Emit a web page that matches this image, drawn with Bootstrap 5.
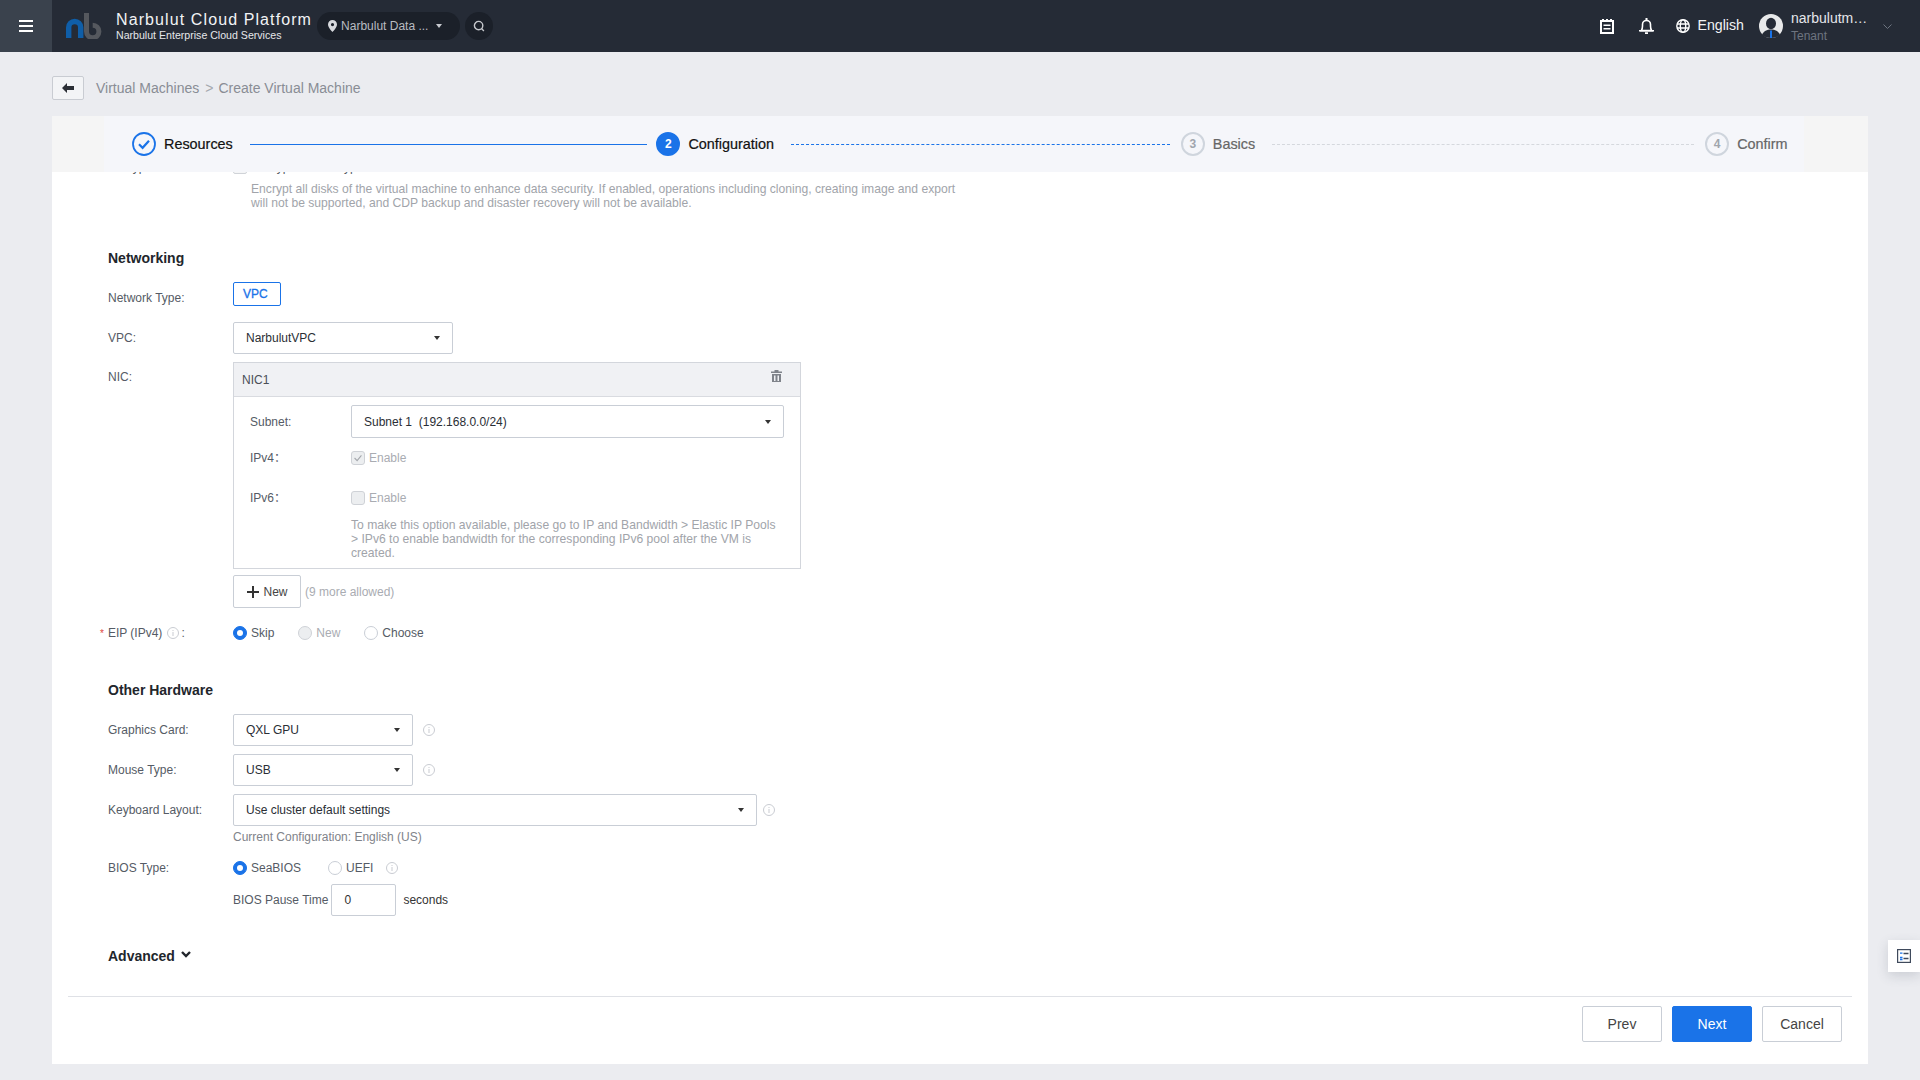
<!DOCTYPE html>
<html lang="en">
<head>
  <meta charset="UTF-8">
  <title>Create Virtual Machine</title>
  <link href="https://cdn.jsdelivr.net/npm/bootstrap@5.3.3/dist/css/bootstrap.min.css" rel="stylesheet">
  <style>
    html, body { height: 100%; }
    body {
      background: #ebecf0;
      font-family: "Liberation Sans", "Noto Sans CJK SC", Arial, sans-serif;
      font-size: 12px;
      color: #555b65;
      overflow: hidden;
      position: relative;
    }
    .topbar { height: 52px; background: #252b36; color: #fff; padding: 0; }
    .menu-toggle { width: 52px; height: 52px; background: #3a424d; }
    .brand-logo { margin-left: 14px; margin-right: 14px; }
    .brand-title { font-size: 16px; letter-spacing: 1.1px; line-height: 18px; color: #f2f3f5; white-space: nowrap; }
    .brand-sub { font-size: 10.6px; line-height: 13px; color: #e6e7ea; white-space: nowrap; }
    .dc-pill { width: 143px; height: 28px; margin-left: 5px; border-radius: 14px; background: #1b2029; color: #b9bcc2; padding-left: 11px; }
    .dc-caret { margin-left: 8px; border-top: 4px solid #c8cad0; border-left: 3.5px solid transparent; border-right: 3.5px solid transparent; }
    .dc-search { width: 28px; height: 28px; margin-left: 5px; border-radius: 50%; background: #1b2029; }
    .top-right { margin-left: auto; }
    .lang-name { font-size: 14.2px; color: #f2f3f5; margin-left: 7px; margin-right: 15px; }
    .user-name { width: 78px; padding-top: 1px; font-size: 14px; line-height: 18px; color: #e4e6ea; overflow: hidden; text-overflow: ellipsis; white-space: nowrap; }
    .user-role { margin-top: 1px; font-size: 12px; line-height: 16px; color: #6d7480; }
    .page-main { padding: 24px 52px 0; }
    .crumbs { height: 24px; margin-bottom: 16px; font-size: 14px; color: #898d95; }
    .back-btn { width: 32px; height: 24px; padding: 0; background: #f3f4f6; border: 1px solid #c9ccd2; border-radius: 2px; margin-right: 12px; }
    .crumb-sep { margin: 0 5px 0 6px; color: #a5a8ae; }
    .wizard { height: 948px; background: #fff; border: 0; border-radius: 0; }
    .steps-outer { height: 56px; background: #f5f5f5; padding: 0 64px 0 52px; flex: none; }
    .steps-inner { height: 56px; background: #f5f6fa; padding: 0 16px 0 28px; }
    .step-seg { width: 524.4px; flex: none; }
    .step-dot { width: 24px; height: 24px; border-radius: 50%; border: 2px solid #cfd5dd; color: #a0a5ad; font-size: 12px; font-weight: 700; flex: none; }
    .step-dot.is-on { background: #1a73e8; border-color: #1a73e8; color: #fff; }
    .step-text { font-size: 14.4px; margin-left: 8px; margin-top: 2px; color: #666; -webkit-text-stroke: .2px currentColor; white-space: nowrap; }
    .step-text.is-on { color: #111; }
    .step-line { flex: 1; margin: 0 11px 0 17px; border-top: 1px dashed #d5d8dd; }
    .step-line.line-done { border-top: 1.5px solid #1a73e8; margin-right: 9px; }
    .step-line.line-now { border-top: 1.5px dashed #1a73e8; }
    .form-scroll { height: 824px; overflow: hidden; padding-left: 56px; flex: none; }
    .clip-row { margin-top: -13px; height: 17px; line-height: 17px; }
    .clip-row .fake-box { width: 14px; height: 14px; border: 1px solid #d0d3d8; border-radius: 2px; background: #f4f5f6; margin-top: 1px; margin-right: 5px; }
    .hint { font-size: 12.14px; line-height: 14px; color: #a1a4aa; }
    .sec-title { font-size: 14px; font-weight: 700; line-height: 20px; color: #22262c; }
    .fld { display: flex; align-items: flex-start; }
    .fld-label { width: 125px; flex: none; line-height: 32px; white-space: nowrap; }
    .vpc-tag { width: 48px; height: 24px; padding: 0 0 0 9px; text-align: left; font-size: 12px; line-height: 22px; -webkit-text-stroke: .3px currentColor; color: #1a73e8; border: 1px solid #1a73e8; border-radius: 2px; background: #fff; }
    .pick-btn { height: 32px; padding: 0 12px; display: flex; align-items: center; justify-content: space-between; font-size: 12px; color: #2a2e35; background: #fff; border: 1px solid #c9ced6; border-radius: 2px; }
    .pick-btn.dropdown-toggle::after { border-top-width: 4px; border-left-width: 3.5px; border-right-width: 3.5px; margin-left: 0; color: #333; }
    .w-180 { width: 180px; }
    .w-220 { width: 220px; }
    .w-433 { width: 433px; height: 33px; }
    .w-524 { width: 524px; }
    .info-ic { margin-left: 10px; margin-top: 10px; flex: none; }
    .nic-box { width: 568px; background: #fff; border: 1px solid #d3d6dc; border-radius: 0; }
    .nic-head { height: 34px; background: #f0f1f4; border-bottom: 1px solid #d9dbe0; padding: 0 18px 0 8px; color: #4a4f57; }
    .nic-body { padding: 8px 13px 8px 16px; }
    .nic-label { width: 101px; flex: none; }
    .nic-line { height: 20px; }
    .form-check-input.mini { width: 14px; height: 14px; margin: 0 4px 0 0; flex: none; float: none; }
    .form-check-input.mini:checked { background-color: #1a73e8; border-color: #1a73e8; }
    .form-check-input.mini:disabled { opacity: 1; background-color: #eceef0; border-color: #cfd2d7; }
    .form-check-input.mini.ticked:disabled { background-image: url("data:image/svg+xml,%3csvg xmlns='http://www.w3.org/2000/svg' viewBox='0 0 14 14'%3e%3cpath fill='none' stroke='%23a5a8ad' stroke-width='1.3' d='M3 7l3 3 5-6'/%3e%3c/svg%3e"); }
    .form-check-input.mini[type=radio]:not(:checked):not(:disabled) { border-color: #c9ced6; }
    .off-text { color: #a9acb2; }
    .add-btn { width: 68px; height: 33px; padding: 0 0 0 1px; font-size: 12px; color: #444; background: #fff; border: 1px solid #c9ced6; border-radius: 2px; }
    .req-star { color: #e0473e; margin-left: -8px; margin-right: 4px; font-size: 10px; }
    .opt-gap { margin-right: 24px; }
    .pause-input { width: 65px; height: 32px; padding: 0 12px; margin: 0 7px 0 3px; font-size: 12px; color: #333; border: 1px solid #c9ced6; border-radius: 2px; }
    .wizard-foot { margin: 0 16px; height: 68px; border-top: 1px solid #dfe1e6; padding: 9px 10px 0 0; column-gap: 10px; flex: none; }
    .foot-btn { width: 80px; height: 36px; padding: 0; font-size: 14px; color: #444; background: #fff; border: 1px solid #c9ced6; border-radius: 2px; }
    .foot-btn.is-next { background: #1a73e8; border-color: #1a73e8; color: #fff; }
    .side-tab { position: absolute; right: 0; top: 940px; width: 32px; height: 32px; background: #fff; box-shadow: 0 4px 12px rgba(60, 70, 90, .18); }
  </style>
</head>
<body>

<!-- Top bar -->
<nav class="navbar topbar flex-nowrap align-items-center">
  <div class="d-flex align-items-center">
    <div class="menu-toggle d-flex align-items-center justify-content-center">
      <svg width="14" height="12" viewBox="0 0 14 12"><path fill="#fff" d="M0 0h14v2H0zM0 5h14v2H0zM0 10h14v2H0z"/></svg>
    </div>
    <svg class="brand-logo" width="36" height="26" viewBox="0 0 36 26">
      <path fill="none" stroke="#0f5ea8" stroke-width="5.4" d="M2.7 25V14.500a6 6 0 0 1 12 0V25"/>
      <path fill="none" stroke="#55585e" stroke-width="5" d="M20.500 0v18.500a6.200 6.200 0 1 0 6.200-6.200"/>
    </svg>
    <div>
      <div class="brand-title">Narbulut Cloud Platform</div>
      <div class="brand-sub">Narbulut Enterprise Cloud Services</div>
    </div>
    <div class="dc-pill d-flex align-items-center">
      <svg class="me-1" width="9" height="12" viewBox="0 0 9 12"><path fill="#d8dade" fill-rule="evenodd" d="M4.500 0A4.500 4.500 0 0 0 0 4.500C0 7.500 4.500 12 4.500 12S9 7.500 9 4.500A4.500 4.500 0 0 0 4.500 0zm0 3a1.600 1.600 0 1 1 0 3.200 1.600 1.600 0 0 1 0-3.200z"/></svg>
      <span>Narbulut Data ...</span>
      <span class="dc-caret"></span>
    </div>
    <div class="dc-search d-flex align-items-center justify-content-center">
      <svg width="12" height="12" viewBox="0 0 12 12"><circle cx="5.600" cy="5.600" r="4.200" fill="none" stroke="#c6c8cd" stroke-width="1.400"/><path stroke="#c6c8cd" stroke-width="1.400" d="M8.500 8.500l2.400 2.400"/></svg>
    </div>
  </div>
  <div class="top-right d-flex align-items-center">
    <svg width="14" height="15" viewBox="0 0 14 15" style="margin-right:25px"><path fill="#fff" fill-rule="evenodd" d="M0 1h2V0h2v1h2V0h2v1h2V0h2v1h2v14H0zM2 3v10h10V3zM3.500 5.500h7V7h-7zM3.500 9h7v1.500h-7z"/></svg>
    <svg width="15" height="16" viewBox="0 0 15 16" style="margin-right:22px"><path fill="none" stroke="#fff" stroke-width="1.600" d="M2.300 12.600c1-1.400 1.200-2.800 1.200-4.600V6.500a4 4 0 0 1 8 0V8c0 1.800.2 3.200 1.200 4.600z"/><path fill="#fff" d="M0 12h15v1.500H0zM6 14.200h3V16H6zM6.500 0h2v2h-2z"/></svg>
    <svg width="14" height="14" viewBox="0 0 14 14"><g fill="none" stroke="#fff" stroke-width="1.400"><circle cx="7" cy="7" r="6.200"/><ellipse cx="7" cy="7" rx="2.700" ry="6.200"/><path d="M1 5h12M1 9h12"/></g></svg>
    <span class="lang-name">English</span>
    <svg class="me-2" width="24" height="24" viewBox="0 0 24 24">
      <circle cx="12" cy="12" r="12" fill="#e8e9ea"/>
      <ellipse cx="12" cy="9.500" rx="5" ry="5.800" fill="#252b36"/>
      <path fill="#252b36" d="M3 21c1.500-4 5-5.500 9-5.500s7.500 1.500 9 5.500c-2.200 2-5.500 3-9 3s-6.800-1-9-3z"/>
      <path fill="#1a73e8" d="M11 16.500h2v7.500h-2z"/>
    </svg>
    <div>
      <div class="user-name">narbulutmanager</div>
      <div class="user-role">Tenant</div>
    </div>
    <svg style="margin-left:14px;margin-right:28px" width="9" height="5" viewBox="0 0 9 5"><path fill="none" stroke="#6d7480" d="M.5.5l4 4 4-4"/></svg>
  </div>
</nav>

<div class="page-main">
  <!-- Breadcrumb -->
  <div class="crumbs d-flex align-items-center">
    <button type="button" class="btn back-btn d-flex align-items-center justify-content-center">
      <svg width="12" height="10" viewBox="0 0 12 10"><path fill="#2b2f36" d="M0 5l5-5v3h7v4H5v3z"/></svg>
    </button>
    <span>Virtual Machines</span><span class="crumb-sep">&gt;</span><span>Create Virtual Machine</span>
  </div>

  <div class="card wizard">
    <!-- Steps -->
    <div class="steps-outer">
      <div class="steps-inner d-flex align-items-center">
        <div class="step-seg d-flex align-items-center">
          <svg width="24" height="24" viewBox="0 0 24 24" class="flex-none"><circle cx="12" cy="12" r="11" fill="none" stroke="#1a73e8" stroke-width="1.800"/><path fill="none" stroke="#1a73e8" stroke-width="2.200" d="M7 12.300l3.600 3.500 6.400-7"/></svg>
          <span class="step-text is-on">Resources</span>
          <span class="step-line line-done"></span>
        </div>
        <div class="step-seg d-flex align-items-center">
          <span class="step-dot is-on d-flex align-items-center justify-content-center">2</span>
          <span class="step-text is-on">Configuration</span>
          <span class="step-line line-now"></span>
        </div>
        <div class="step-seg d-flex align-items-center">
          <span class="step-dot d-flex align-items-center justify-content-center">3</span>
          <span class="step-text">Basics</span>
          <span class="step-line"></span>
        </div>
        <div class="d-flex align-items-center">
          <span class="step-dot d-flex align-items-center justify-content-center">4</span>
          <span class="step-text">Confirm</span>
        </div>
      </div>
    </div>

    <!-- Form, scrolled part way down -->
    <div class="form-scroll">
      <div class="fld clip-row">
        <div class="fld-label" style="line-height:17px">Encryption:</div>
        <span class="fake-box"></span><span>Encrypt the disk type</span>
      </div>
      <div class="hint" style="margin:6px 0 0 143px;width:720px">Encrypt all disks of the virtual machine to enhance data security. If enabled, operations including cloning, creating image and export will not be supported, and CDP backup and disaster recovery will not be available.</div>

      <div class="sec-title" style="margin-top:38px">Networking</div>
      <div class="fld" style="margin-top:14px">
        <div class="fld-label" style="line-height:32px">Network Type:</div>
        <button type="button" class="btn vpc-tag">VPC</button>
      </div>
      <div class="fld" style="margin-top:8px">
        <div class="fld-label">VPC:</div>
        <button type="button" class="btn pick-btn dropdown-toggle w-220">NarbulutVPC</button>
      </div>
      <div class="fld" style="margin-top:8px">
        <div class="fld-label" style="line-height:31px">NIC:</div>
        <div class="nic-box">
          <div class="nic-head d-flex align-items-center justify-content-between">
            <span>NIC1</span>
            <svg width="11" height="12" viewBox="0 0 11 12" style="margin-top:-7px"><path fill="#7f838a" fill-rule="evenodd" d="M3.500 0h4v1.500H11V3H0V1.500h3.500zM1 4h9v8H1zM3 5.500V11h1.500V5.500zM6.500 5.500V11H8V5.500z"/></svg>
          </div>
          <div class="nic-body">
            <div class="d-flex align-items-center">
              <div class="nic-label">Subnet:</div>
              <button type="button" class="btn pick-btn dropdown-toggle w-433">Subnet 1&nbsp; (192.168.0.0/24)</button>
            </div>
            <div class="nic-line d-flex align-items-center" style="margin-top:10px">
              <div class="nic-label">IPv4：</div>
              <input class="form-check-input mini ticked" type="checkbox" checked disabled>
              <span class="off-text">Enable</span>
            </div>
            <div class="nic-line d-flex align-items-center" style="margin-top:20px">
              <div class="nic-label">IPv6：</div>
              <input class="form-check-input mini" type="checkbox" disabled>
              <span class="off-text">Enable</span>
            </div>
            <div class="hint" style="margin:10px 0 0 101px;width:430px">To make this option available, please go to IP and Bandwidth &gt; Elastic IP Pools &gt; IPv6 to enable bandwidth for the corresponding IPv6 pool after the VM is created.</div>
          </div>
        </div>
      </div>
      <div class="d-flex align-items-center" style="margin:6px 0 0 125px">
        <button type="button" class="btn add-btn d-flex align-items-center justify-content-center">
          <svg class="me-1" width="12" height="12" viewBox="0 0 12 12"><path fill="#333" d="M5 0h2v5h5v2H7v5H5V7H0V5h5z"/></svg>New
        </button>
        <span class="off-text ms-1">(9 more allowed)</span>
      </div>
      <div class="fld" style="margin-top:9px">
        <div class="fld-label"><span class="req-star">*</span>EIP (IPv4)<svg width="12" height="12" viewBox="0 0 12 12" style="vertical-align:-2px;margin:0 2px 0 5px"><circle cx="6" cy="6" r="5.500" fill="none" stroke="#c9ccd2"/><path fill="#c9ccd2" d="M5.500 3h1v1h-1zM5.500 5h1v4h-1z"/></svg>:</div>
        <div class="d-flex align-items-center" style="height:32px">
          <input class="form-check-input mini" type="radio" checked>
          <span class="opt-gap">Skip</span>
          <input class="form-check-input mini" type="radio" disabled>
          <span class="off-text opt-gap">New</span>
          <input class="form-check-input mini" type="radio">
          <span>Choose</span>
        </div>
      </div>

      <div class="sec-title" style="margin-top:30px">Other Hardware</div>
      <div class="fld" style="margin-top:14px">
        <div class="fld-label">Graphics Card:</div>
        <button type="button" class="btn pick-btn dropdown-toggle w-180">QXL GPU</button>
        <svg class="info-ic" width="12" height="12" viewBox="0 0 12 12"><circle cx="6" cy="6" r="5.500" fill="none" stroke="#c9ccd2"/><path fill="#c9ccd2" d="M5.500 3h1v1h-1zM5.500 5h1v4h-1z"/></svg>
      </div>
      <div class="fld" style="margin-top:8px">
        <div class="fld-label">Mouse Type:</div>
        <button type="button" class="btn pick-btn dropdown-toggle w-180">USB</button>
        <svg class="info-ic" width="12" height="12" viewBox="0 0 12 12"><circle cx="6" cy="6" r="5.500" fill="none" stroke="#c9ccd2"/><path fill="#c9ccd2" d="M5.500 3h1v1h-1zM5.500 5h1v4h-1z"/></svg>
      </div>
      <div class="fld" style="margin-top:8px">
        <div class="fld-label">Keyboard Layout:</div>
        <div>
          <button type="button" class="btn pick-btn dropdown-toggle w-524">Use cluster default settings</button>
          <div style="margin-top:4px;line-height:14px;color:#7f838a">Current Configuration: English (US)</div>
        </div>
        <svg class="info-ic" style="margin-left:6px" width="12" height="12" viewBox="0 0 12 12"><circle cx="6" cy="6" r="5.500" fill="none" stroke="#c9ccd2"/><path fill="#c9ccd2" d="M5.500 3h1v1h-1zM5.500 5h1v4h-1z"/></svg>
      </div>
      <div class="fld" style="margin-top:14px">
        <div class="fld-label" style="line-height:20px">BIOS Type:</div>
        <div class="d-flex align-items-center" style="height:20px">
          <input class="form-check-input mini" type="radio" checked>
          <span style="margin-right:27px">SeaBIOS</span>
          <input class="form-check-input mini" type="radio">
          <span>UEFI</span>
          <svg style="margin-left:13px" width="12" height="12" viewBox="0 0 12 12"><circle cx="6" cy="6" r="5.500" fill="none" stroke="#c9ccd2"/><path fill="#c9ccd2" d="M5.500 3h1v1h-1zM5.500 5h1v4h-1z"/></svg>
        </div>
      </div>
      <div class="d-flex align-items-center" style="margin:6px 0 0 125px">
        <span>BIOS Pause Time</span>
        <input class="form-control pause-input" type="text" value="0">
        <span style="color:#333">seconds</span>
      </div>
      <div class="sec-title d-flex align-items-center" style="margin-top:30px">Advanced
        <svg style="margin:-4px 0 0 6px" width="10" height="7" viewBox="0 0 10 7"><path fill="none" stroke="#22262c" stroke-width="2.400" d="M1 1l4 4 4-4"/></svg>
      </div>
    </div>

    <!-- Footer -->
    <div class="wizard-foot d-flex justify-content-end">
      <button type="button" class="btn foot-btn">Prev</button>
      <button type="button" class="btn foot-btn is-next">Next</button>
      <button type="button" class="btn foot-btn">Cancel</button>
    </div>
  </div>
</div>

<!-- Floating task tab -->
<div class="side-tab d-flex align-items-center justify-content-center">
  <svg width="14" height="14" viewBox="0 0 14 14"><rect x=".6" y=".6" width="12.800" height="12.800" fill="none" stroke="#3f4a5c" stroke-width="1.200"/><path stroke="#1a73e8" stroke-width="1.300" d="M3 4.200h2.500M3 8.500h2.500M3 10.500h2.500"/><path stroke="#3f4a5c" stroke-width="1.300" d="M6.500 4.500h5M6.500 9.500h5"/></svg>
</div>

<script src="https://cdn.jsdelivr.net/npm/bootstrap@5.3.3/dist/js/bootstrap.bundle.min.js"></script>
</body>
</html>
